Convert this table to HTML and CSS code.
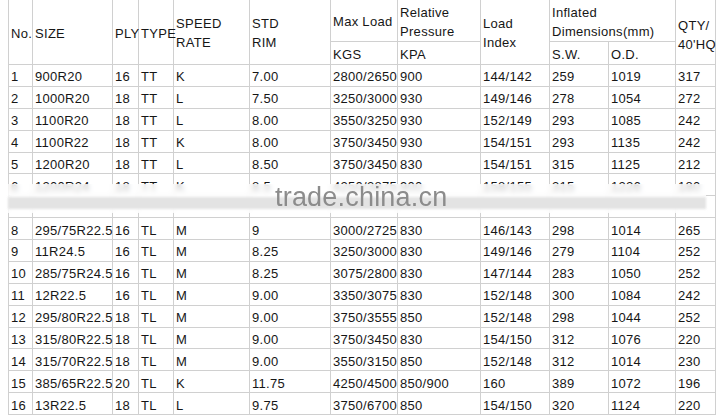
FILE: index.html
```html
<!DOCTYPE html>
<html>
<head>
<meta charset="utf-8">
<link rel="stylesheet" href="styles.css">
</head>
<body>
<div class="sheet">
<table class="spec">
<colgroup>
<col class="c-no"><col class="c-size"><col class="c-ply"><col class="c-type"><col class="c-speed"><col class="c-rim"><col class="c-load"><col class="c-press"><col class="c-index"><col class="c-sw"><col class="c-od"><col class="c-qty">
</colgroup>
<thead>
<tr class="h1">
<th rowspan="2">No.</th>
<th rowspan="2">SIZE</th>
<th rowspan="2">PLY</th>
<th rowspan="2">TYPE</th>
<th rowspan="2">SPEED<br>RATE</th>
<th rowspan="2">STD<br>RIM</th>
<th>Max Load</th>
<th>Relative<br>Pressure</th>
<th rowspan="2">Load<br>Index</th>
<th colspan="2">Inflated<br>Dimensions(mm)</th>
<th rowspan="2" class="qty">QTY/<br>40'HQ</th>
</tr>
<tr class="h2">
<th>KGS</th><th>KPA</th><th>S.W.</th><th>O.D.</th>
</tr>
</thead>
<tbody>
<tr><td>1</td><td>900R20</td><td>16</td><td>TT</td><td>K</td><td>7.00</td><td>2800/2650</td><td>900</td><td>144/142</td><td>259</td><td>1019</td><td>317</td></tr>
<tr><td>2</td><td>1000R20</td><td>18</td><td>TT</td><td>L</td><td>7.50</td><td>3250/3000</td><td>930</td><td>149/146</td><td>278</td><td>1054</td><td>272</td></tr>
<tr><td>3</td><td>1100R20</td><td>18</td><td>TT</td><td>L</td><td>8.00</td><td>3550/3250</td><td>930</td><td>152/149</td><td>293</td><td>1085</td><td>242</td></tr>
<tr><td>4</td><td>1100R22</td><td>18</td><td>TT</td><td>K</td><td>8.00</td><td>3750/3450</td><td>930</td><td>154/151</td><td>293</td><td>1135</td><td>242</td></tr>
<tr><td>5</td><td>1200R20</td><td>18</td><td>TT</td><td>L</td><td>8.50</td><td>3750/3450</td><td>830</td><td>154/151</td><td>315</td><td>1125</td><td>212</td></tr>
<tr><td>6</td><td>1200R24</td><td>18</td><td>TT</td><td>K</td><td>8.5</td><td>4250/3875</td><td>900</td><td>158/155</td><td>315</td><td>1226</td><td>180</td></tr>
<tr><td></td><td></td><td></td><td></td><td></td><td></td><td></td><td></td><td></td><td></td><td></td><td></td></tr>
<tr><td>8</td><td>295/75R22.5</td><td>16</td><td>TL</td><td>M</td><td>9</td><td>3000/2725</td><td>830</td><td>146/143</td><td>298</td><td>1014</td><td>265</td></tr>
<tr><td>9</td><td>11R24.5</td><td>16</td><td>TL</td><td>M</td><td>8.25</td><td>3250/3000</td><td>830</td><td>149/146</td><td>279</td><td>1104</td><td>252</td></tr>
<tr><td>10</td><td>285/75R24.5</td><td>16</td><td>TL</td><td>M</td><td>8.25</td><td>3075/2800</td><td>830</td><td>147/144</td><td>283</td><td>1050</td><td>252</td></tr>
<tr><td>11</td><td>12R22.5</td><td>16</td><td>TL</td><td>M</td><td>9.00</td><td>3350/3075</td><td>830</td><td>152/148</td><td>300</td><td>1084</td><td>242</td></tr>
<tr><td>12</td><td>295/80R22.5</td><td>18</td><td>TL</td><td>M</td><td>9.00</td><td>3750/3555</td><td>850</td><td>152/148</td><td>298</td><td>1044</td><td>252</td></tr>
<tr><td>13</td><td>315/80R22.5</td><td>18</td><td>TL</td><td>M</td><td>9.00</td><td>3750/3450</td><td>830</td><td>154/150</td><td>312</td><td>1076</td><td>220</td></tr>
<tr><td>14</td><td>315/70R22.5</td><td>18</td><td>TL</td><td>M</td><td>9.00</td><td>3550/3150</td><td>850</td><td>152/148</td><td>312</td><td>1014</td><td>230</td></tr>
<tr><td>15</td><td>385/65R22.5</td><td>20</td><td>TL</td><td>K</td><td>11.75</td><td>4250/4500</td><td>850/900</td><td>160</td><td>389</td><td>1072</td><td>196</td></tr>
<tr><td>16</td><td>13R22.5</td><td>18</td><td>TL</td><td>L</td><td>9.75</td><td>3750/6700</td><td>850</td><td>154/150</td><td>320</td><td>1124</td><td>220</td></tr>
</tbody>
</table>
<div class="watermark">
<div class="wm-band"></div>
<span class="wm-text">trade.china.cn</span>
</div>
</div>
</body>
</html>
```
FILE: styles.css
```css
html, body {
  margin: 0;
  padding: 0;
  background: #fff;
}
.sheet {
  position: relative;
  width: 727px;
  height: 418px;
  overflow: hidden;
}
.spec {
  margin: -1px 0 0 8px;
  width: 707px;
  table-layout: fixed;
  border-collapse: collapse;
  font-family: "Liberation Sans", Arial, sans-serif;
  font-size: 13px;
  letter-spacing: 0.3px;
  color: #161616;
}
.c-no { width: 24px; }
.c-size { width: 80px; }
.c-ply { width: 26px; }
.c-type { width: 35px; }
.c-speed { width: 76px; }
.c-rim { width: 81px; }
.c-load { width: 67px; }
.c-press { width: 83px; }
.c-index { width: 69px; }
.c-sw { width: 59px; }
.c-od { width: 67px; }
.c-qty { width: 40px; }
.spec th, .spec td {
  border: 1px solid #d0d0d0;
  padding: 2px 0 0 2px;
  text-align: left;
  font-weight: normal;
  white-space: nowrap;
  overflow: visible;
  line-height: 19px;
  vertical-align: middle;
}
.spec .h1 th { height: 39px; }
.spec .h2 th { height: 19px; padding-top: 3px; }
.spec th.qty { padding-top: 6px; }
.spec tbody tr { height: 21.875px; }
.spec td { padding-top: 3px; padding-bottom: 0; line-height: 17px; }
.watermark {
  position: absolute;
  left: 8px;
  top: 184px;
  width: 698px;
  height: 29px;
  background: rgba(255, 255, 255, 0.72);
  backdrop-filter: blur(2.5px);
}
.wm-band {
  position: absolute;
  left: 0;
  right: 0;
  top: 13px;
  height: 12px;
  background: rgba(224, 224, 224, 0.9);
  filter: blur(1px);
}
.wm-text {
  position: absolute;
  left: 267px;
  top: -2px;
  font-family: "Liberation Sans", Arial, sans-serif;
  font-size: 27px;
  letter-spacing: 0.2px;
  color: #8c8c8c;
  line-height: 31px;
}
```
